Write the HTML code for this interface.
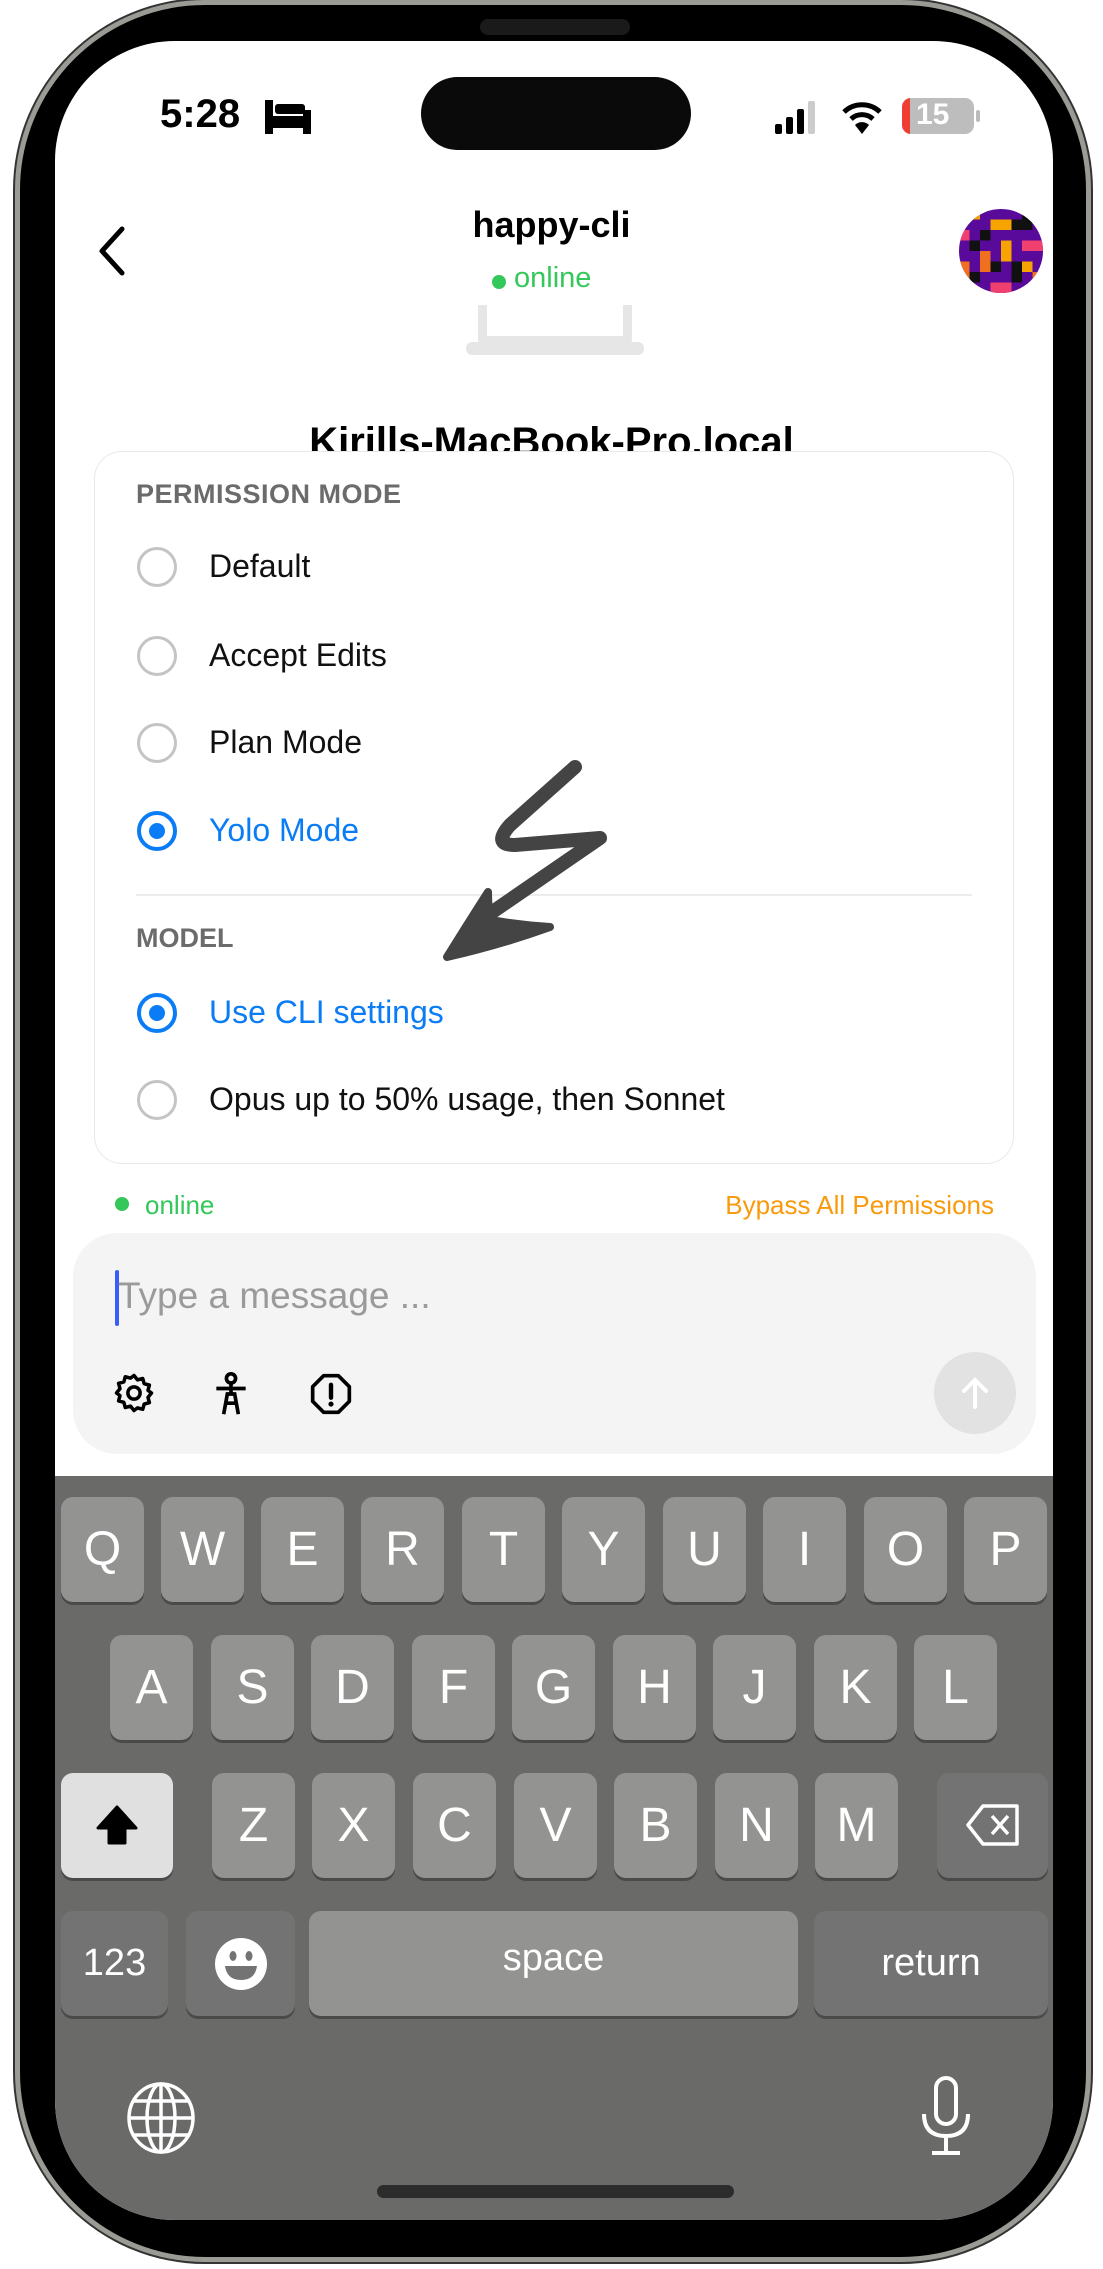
<!DOCTYPE html>
<html><head><meta charset="utf-8"><style>
*{margin:0;padding:0;box-sizing:border-box}
body{width:1103px;height:2269px;background:#fff;position:relative;overflow:hidden;font-family:"Liberation Sans",sans-serif}
.abs{position:absolute}
.frame{left:15px;top:0;width:1076px;height:2262px;border-radius:190px;background:#000;border:5px solid #9a9b95;box-shadow:0 0 0 2px #333}
.screen{left:55px;top:41px;width:998px;height:2179px;border-radius:120px;background:#fff;overflow:hidden}
.key{position:absolute;height:105px;border-radius:12px;background:#939392;color:#fff;font-size:48px;text-align:center;line-height:105px;box-shadow:0 3px 0 #4a4a4a}
.sp{background:#737373}
.radio{position:absolute;left:137px;width:40px;height:40px;border-radius:50%;border:3px solid #c4c4c4}
.radio.on{border:4px solid #0a7cf5}
.radio.on::after{content:"";position:absolute;left:8px;top:8px;width:16px;height:16px;border-radius:50%;background:#0a7cf5}
.lab{position:absolute;left:209px;font-size:32px;color:#111}
</style></head><body>
<div class="abs frame"></div>
<div class="abs" style="left:480px;top:19px;width:150px;height:16px;border-radius:8px;background:#1a1a1a"></div>
<div class="abs screen">
 <!-- keyboard bg -->
 <div class="abs" style="left:0;top:1435px;width:998px;height:760px;background:#6a6a68"></div>
</div>
<!-- status bar -->
<div class="abs" style="left:160px;top:92px;font-size:40px;font-weight:bold;color:#000">5:28</div>
<svg class="abs" style="left:265px;top:100px" width="46" height="34" viewBox="0 0 46 34"><rect x="0" y="0" width="8" height="34" fill="#000"/><rect x="38" y="10" width="8" height="24" fill="#000"/><rect x="0" y="16" width="46" height="12" fill="#000"/><rect x="10" y="4" width="30" height="10" rx="3" fill="#000"/></svg>
<div class="abs" style="left:421px;top:77px;width:270px;height:73px;border-radius:37px;background:#0a0a0a"></div>
<svg class="abs" style="left:775px;top:100px" width="50" height="34"><rect x="0" y="24" width="7" height="10" rx="2"/><rect x="11" y="17" width="7" height="17" rx="2"/><rect x="22" y="9" width="7" height="25" rx="2"/><rect x="33" y="1" width="7" height="33" rx="2" fill="#ccc"/></svg>
<svg class="abs" style="left:842px;top:100px" width="40" height="34" viewBox="0 0 40 34"><path d="M2 12 A26 26 0 0 1 38 12" stroke="#000" stroke-width="5" fill="none"/><path d="M9 19 A16 16 0 0 1 31 19" stroke="#000" stroke-width="5" fill="none"/><path d="M20 34 L13 25 A10 10 0 0 1 27 25Z"/></svg>
<div class="abs" style="left:902px;top:98px;width:72px;height:36px;border-radius:9px;background:#bdbdbd;overflow:hidden"><div style="width:8px;height:36px;background:#f03c32"></div></div>
<div class="abs" style="left:916px;top:98px;font-size:30px;font-weight:bold;color:#fff">15</div>
<div class="abs" style="left:976px;top:110px;width:4px;height:12px;border-radius:2px;background:#bbb"></div>
<!-- header -->
<svg class="abs" style="left:94px;top:225px" width="34" height="52"><path d="M28 4 L8 26 L28 48" stroke="#000" stroke-width="5" fill="none" stroke-linecap="round" stroke-linejoin="round"/></svg>
<div class="abs" style="left:0;width:1103px;top:204px;text-align:center;font-size:36px;font-weight:bold;color:#000">happy-cli</div>
<div class="abs" style="left:492px;top:275px;width:14px;height:14px;border-radius:50%;background:#34c759"></div>
<div class="abs" style="left:514px;top:262px;font-size:29px;color:#34c759">online</div>
<svg class="abs" style="left:959px;top:209px" width="84" height="84" viewBox="0 0 8 8"><clipPath id="c"><circle cx="4" cy="4" r="4"/></clipPath><g clip-path="url(#c)">
<rect width="8" height="8" fill="#5a0a9a"/>
<rect x="1" y="0" width="1" height="1" fill="#f8a400"/><rect x="3" y="1" width="2" height="1" fill="#f8a400"/><rect x="0" y="2" width="1" height="1" fill="#f04070"/><rect x="2" y="2" width="1" height="1" fill="#111"/><rect x="5" y="1" width="1" height="1" fill="#111"/><rect x="4" y="3" width="1" height="2" fill="#f8a400"/><rect x="1" y="3" width="1" height="1" fill="#111"/><rect x="6" y="3" width="2" height="1" fill="#f04070"/><rect x="0" y="5" width="1" height="2" fill="#f07020"/><rect x="2" y="4" width="1" height="2" fill="#f07020"/><rect x="3" y="5" width="1" height="1" fill="#111"/><rect x="5" y="5" width="1" height="2" fill="#111"/><rect x="6" y="5" width="1" height="1" fill="#f8a400"/><rect x="1" y="6" width="1" height="1" fill="#111"/><rect x="3" y="7" width="2" height="1" fill="#f04070"/><rect x="7" y="6" width="1" height="2" fill="#f07020"/><rect x="6" y="0" width="1" height="2" fill="#111"/></g></svg>
<!-- laptop -->
<div class="abs" style="left:478px;top:305px;width:154px;height:40px;border:9px solid #e6e6e6;border-top:none;border-radius:0 0 6px 6px"></div>
<div class="abs" style="left:466px;top:342px;width:178px;height:13px;border-radius:6px;background:#e6e6e6"></div>
<div class="abs" style="left:0;width:1103px;top:412px;height:40px;overflow:hidden;text-align:center;font-size:40px;font-weight:bold;color:#000;line-height:60px">Kirills-MacBook-Pro.local</div>
<!-- card -->
<div class="abs" style="left:94px;top:451px;width:920px;height:713px;border:1.5px solid #e8e8e8;border-radius:28px;background:#fff"></div>
<div class="abs" style="left:136px;top:479px;font-size:27px;font-weight:bold;color:#6b6b6b;letter-spacing:.5px">PERMISSION MODE</div>
<div class="radio" style="top:547px"></div><div class="lab" style="top:548px">Default</div>
<div class="radio" style="top:636px"></div><div class="lab" style="top:637px">Accept Edits</div>
<div class="radio" style="top:723px"></div><div class="lab" style="top:724px">Plan Mode</div>
<div class="radio on" style="top:811px"></div><div class="lab" style="top:812px;color:#0a7cf5">Yolo Mode</div>
<div class="abs" style="left:136px;top:894px;width:836px;height:2px;background:#ececec"></div>
<div class="abs" style="left:136px;top:923px;font-size:27px;font-weight:bold;color:#6b6b6b">MODEL</div>
<div class="radio on" style="top:993px"></div><div class="lab" style="top:994px;color:#0a7cf5">Use CLI settings</div>
<div class="radio" style="top:1080px"></div><div class="lab" style="top:1081px">Opus up to 50% usage, then Sonnet</div>
<!-- arrow -->
<svg class="abs" style="left:0;top:0" width="1103" height="1000"><path d="M575 767 L510 825 Q492 845 515 845 L600 838 L488 915" stroke="#444" stroke-width="14" fill="none" stroke-linecap="round" stroke-linejoin="round"/><path d="M488 892 Q470 920 447 957 Q500 945 550 927 Q520 925 490 920 Q488 905 488 892Z" fill="#444" stroke="#444" stroke-width="8" stroke-linejoin="round"/></svg>
<!-- status row -->
<div class="abs" style="left:115px;top:1197px;width:14px;height:14px;border-radius:50%;background:#34c759"></div>
<div class="abs" style="left:145px;top:1190px;font-size:26px;color:#34c759">online</div>
<div class="abs" style="right:109px;top:1190px;font-size:26px;color:#f99a0c">Bypass All Permissions</div>
<!-- input -->
<div class="abs" style="left:73px;top:1233px;width:963px;height:221px;border-radius:44px;background:#f4f4f4"></div>
<div class="abs" style="left:115px;top:1270px;width:4px;height:56px;background:#3a5ef5;border-radius:2px"></div>
<div class="abs" style="left:118px;top:1275px;font-size:37px;color:#9a9a9a">Type a message ...</div>
<svg class="abs" style="left:113px;top:1372px" width="42" height="42" viewBox="0 0 24 24"><path d="M12 2l2 2.5 3-.8.8 3 3 .8-.8 3L22 12l-2 2.5.8 3-3 .8-.8 3-3-.8L12 22l-2-2.5-3 .8-.8-3-3-.8.8-3L2 12l2-2.5-.8-3 3-.8.8-3 3 .8z" fill="none" stroke="#000" stroke-width="2" stroke-linejoin="round"/><circle cx="12" cy="12" r="3.5" fill="none" stroke="#000" stroke-width="2"/></svg>
<svg class="abs" style="left:213px;top:1372px" width="36" height="44" viewBox="0 0 18 24"><circle cx="9" cy="3.5" r="2.5" fill="none" stroke="#000" stroke-width="2"/><path d="M1 9h16M9 6v6M5 23l2-11h4l2 11M6 17h6" fill="none" stroke="#000" stroke-width="2"/></svg>
<svg class="abs" style="left:309px;top:1372px" width="44" height="44" viewBox="0 0 24 24"><path d="M8 2h8l6 6v8l-6 6H8l-6-6V8z" fill="none" stroke="#000" stroke-width="2" stroke-linejoin="round"/><path d="M12 7v7" stroke="#000" stroke-width="2.4" stroke-linecap="round"/><circle cx="12" cy="17.5" r="1.4"/></svg>
<div class="abs" style="left:934px;top:1352px;width:82px;height:82px;border-radius:50%;background:#e2e2e2"></div>
<svg class="abs" style="left:955px;top:1373px" width="40" height="40" viewBox="0 0 40 40"><path d="M20 34V7M9 18L20 7l11 11" stroke="#fff" stroke-width="4" fill="none" stroke-linecap="round"/></svg>
<!-- keyboard -->
<div class="key" style="left:61px;top:1497px;width:83px">Q</div>
<div class="key" style="left:161px;top:1497px;width:83px">W</div>
<div class="key" style="left:261px;top:1497px;width:83px">E</div>
<div class="key" style="left:361px;top:1497px;width:83px">R</div>
<div class="key" style="left:462px;top:1497px;width:83px">T</div>
<div class="key" style="left:562px;top:1497px;width:83px">Y</div>
<div class="key" style="left:663px;top:1497px;width:83px">U</div>
<div class="key" style="left:763px;top:1497px;width:83px">I</div>
<div class="key" style="left:864px;top:1497px;width:83px">O</div>
<div class="key" style="left:964px;top:1497px;width:83px">P</div>
<div class="key" style="left:110px;top:1635px;width:83px">A</div>
<div class="key" style="left:211px;top:1635px;width:83px">S</div>
<div class="key" style="left:311px;top:1635px;width:83px">D</div>
<div class="key" style="left:412px;top:1635px;width:83px">F</div>
<div class="key" style="left:512px;top:1635px;width:83px">G</div>
<div class="key" style="left:613px;top:1635px;width:83px">H</div>
<div class="key" style="left:713px;top:1635px;width:83px">J</div>
<div class="key" style="left:814px;top:1635px;width:83px">K</div>
<div class="key" style="left:914px;top:1635px;width:83px">L</div>
<div class="key" style="left:61px;top:1773px;width:112px;background:#e0e0e0"><svg width="50" height="50" viewBox="0 0 50 50" style="margin-top:28px"><path d="M25 6L6 27h11v15h16V27h11z" fill="#000" stroke="#000" stroke-width="3" stroke-linejoin="round"/></svg></div>
<div class="key" style="left:212px;top:1773px;width:83px">Z</div>
<div class="key" style="left:312px;top:1773px;width:83px">X</div>
<div class="key" style="left:413px;top:1773px;width:83px">C</div>
<div class="key" style="left:514px;top:1773px;width:83px">V</div>
<div class="key" style="left:614px;top:1773px;width:83px">B</div>
<div class="key" style="left:715px;top:1773px;width:83px">N</div>
<div class="key" style="left:815px;top:1773px;width:83px">M</div>
<div class="key sp" style="left:937px;top:1773px;width:111px"><svg width="56" height="44" viewBox="0 0 56 44" style="margin-top:30px"><path d="M18 3h34v38H18L3 22z" fill="none" stroke="#fff" stroke-width="3.5" stroke-linejoin="round"/><path d="M27 13l16 18M43 13L27 31" stroke="#fff" stroke-width="3.5"/></svg></div>
<div class="key sp" style="left:61px;top:1911px;width:107px;font-size:38px">123</div>
<div class="key sp" style="left:186px;top:1911px;width:109px"><svg width="54" height="54" viewBox="0 0 54 54" style="margin-top:26px"><circle cx="27" cy="27" r="26" fill="#fff"/><ellipse cx="19" cy="19" rx="3.5" ry="5" fill="#737373"/><ellipse cx="35" cy="19" rx="3.5" ry="5" fill="#737373"/><path d="M11 29h32q-2 14-16 14T11 29z" fill="#737373"/></svg></div>
<div class="key" style="left:309px;top:1911px;width:489px;font-size:38px;line-height:95px">space</div>
<div class="key sp" style="left:814px;top:1911px;width:234px;font-size:38px">return</div>
<svg class="abs" style="left:127px;top:2082px" width="68" height="72" viewBox="0 0 68 72"><g fill="none" stroke="#fff" stroke-width="3.5"><ellipse cx="34" cy="36" rx="32" ry="34"/><ellipse cx="34" cy="36" rx="14" ry="34"/><path d="M34 2v68M2 36h64M7 19h54M7 53h54"/></g></svg>
<svg class="abs" style="left:921px;top:2076px" width="50" height="80" viewBox="0 0 50 80"><g fill="none" stroke="#fff" stroke-width="4"><rect x="15" y="2" width="20" height="46" rx="10"/><path d="M3 38q0 22 22 22t22-22M25 60v16M11 77h28"/></g></svg>
<div class="abs" style="left:377px;top:2185px;width:357px;height:13px;border-radius:7px;background:#2c2c2c"></div>
</body></html>
